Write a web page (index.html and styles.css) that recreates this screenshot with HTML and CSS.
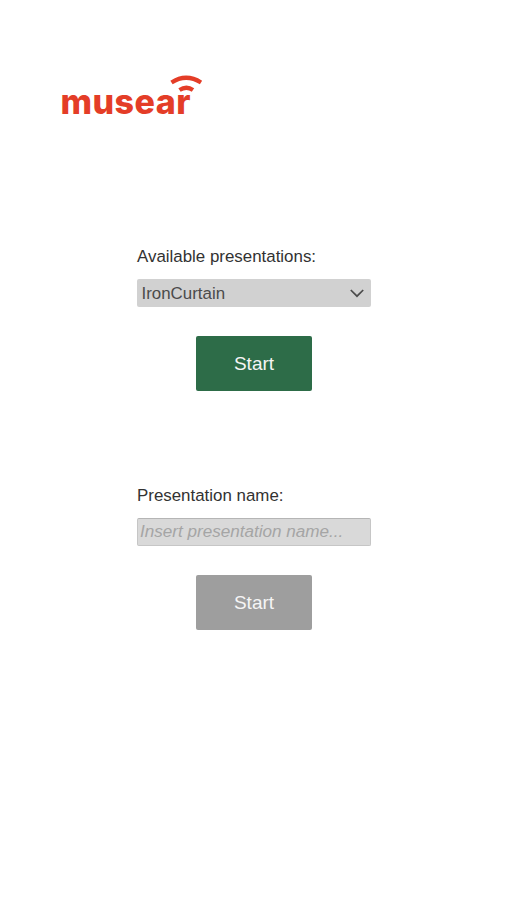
FILE: index.html
```
<!DOCTYPE html>
<html lang="en">

<head>
    <meta charset="UTF-8">
    <meta name="viewport" content="width=device-width, initial-scale=1.0">
    <title>musear</title>
    <link rel="stylesheet" href="styles.css">
</head>

<body>
    <header>
        <svg class="logo" width="150" height="50" viewBox="0 0 150 50" role="img" aria-label="musear">
            <text class="logo-text" x="-0.5" y="41.5" textLength="130" lengthAdjust="spacing">musear</text>
            <!-- signal waves over the r -->
            <path class="wave" d="M110.5 10.5 Q125 1 140 10.5" />
            <path class="wave" d="M118.5 18 Q125.5 13.5 132 18" />
        </svg>
    </header>

    <main>
        <form class="available">
            <label for="presentation">Available presentations:</label>
            <div class="select-box">
                <select id="presentation">
                    <option>IronCurtain</option>
                </select>
                <svg class="arrow" width="14" height="9" viewBox="0 0 14 9">
                    <path d="M0.8 1 L7 7.2 L13.2 1" />
                </svg>
            </div>
            <button type="button" class="start-button">Start</button>
        </form>

        <form class="by-name">
            <label for="presentation_name">Presentation name:</label>
            <input type="text" id="presentation_name" placeholder="Insert presentation name...">
            <button type="button" class="start-button" disabled>Start</button>
        </form>
    </main>
</body>

</html>
```

FILE: styles.css
```
* {
    box-sizing: border-box;
}

body {
    margin: 0;
    background-color: #fff;
    color: #323232;
    font-family: "Liberation Sans", Arial, sans-serif;
    font-size: 16.9px;
}

header {
    height: 246px;
    padding: 72px 0 0 61px;
}

.logo {
    display: block;
    overflow: visible;
}

.logo-text {
    font-family: Inter, sans-serif;
    font-size: 34px;
    font-weight: 800;
    fill: #e43d27;
}

.wave {
    fill: none;
    stroke: #e43d27;
    stroke-width: 4.2;
}

main {
    width: 234px;
    margin-left: 137px;
}

form {
    display: flex;
    flex-direction: column;
    height: 239px;
}

label {
    height: 33px;
    line-height: 21px;
}

.select-box {
    position: relative;
    height: 28px;
}

select,
input {
    display: block;
    width: 100%;
    height: 28px;
    margin: 0;
    border-radius: 2px;
    font-family: inherit;
    font-size: 16.9px;
}

select {
    appearance: none;
    padding: 0 4.5px;
    border: none;
    background-color: #d1d1d1;
    color: #4b4b4b;
}

.arrow {
    position: absolute;
    top: 10px;
    right: 7px;
    fill: none;
    stroke: #4b4b4b;
    stroke-width: 1.7;
    pointer-events: none;
}

input {
    padding: 0 2px 1px;
    border: 1px solid #c6c6c6;
    border-top-color: #b5b5b5;
    background-color: #d9d9d9;
    color: #323232;
}

input::placeholder {
    color: #a5a5a5;
    font-size: 17.1px;
    font-style: italic;
    opacity: 1;
}

.start-button {
    align-self: center;
    width: 116px;
    height: 55px;
    margin-top: 29px;
    padding: 0;
    border: none;
    border-radius: 2px;
    background-color: #2d6c48;
    color: #f5f5f5;
    font-family: inherit;
    font-size: 19px;
    cursor: pointer;
}

.start-button:disabled {
    background-color: #9e9e9e;
    cursor: default;
}
```
